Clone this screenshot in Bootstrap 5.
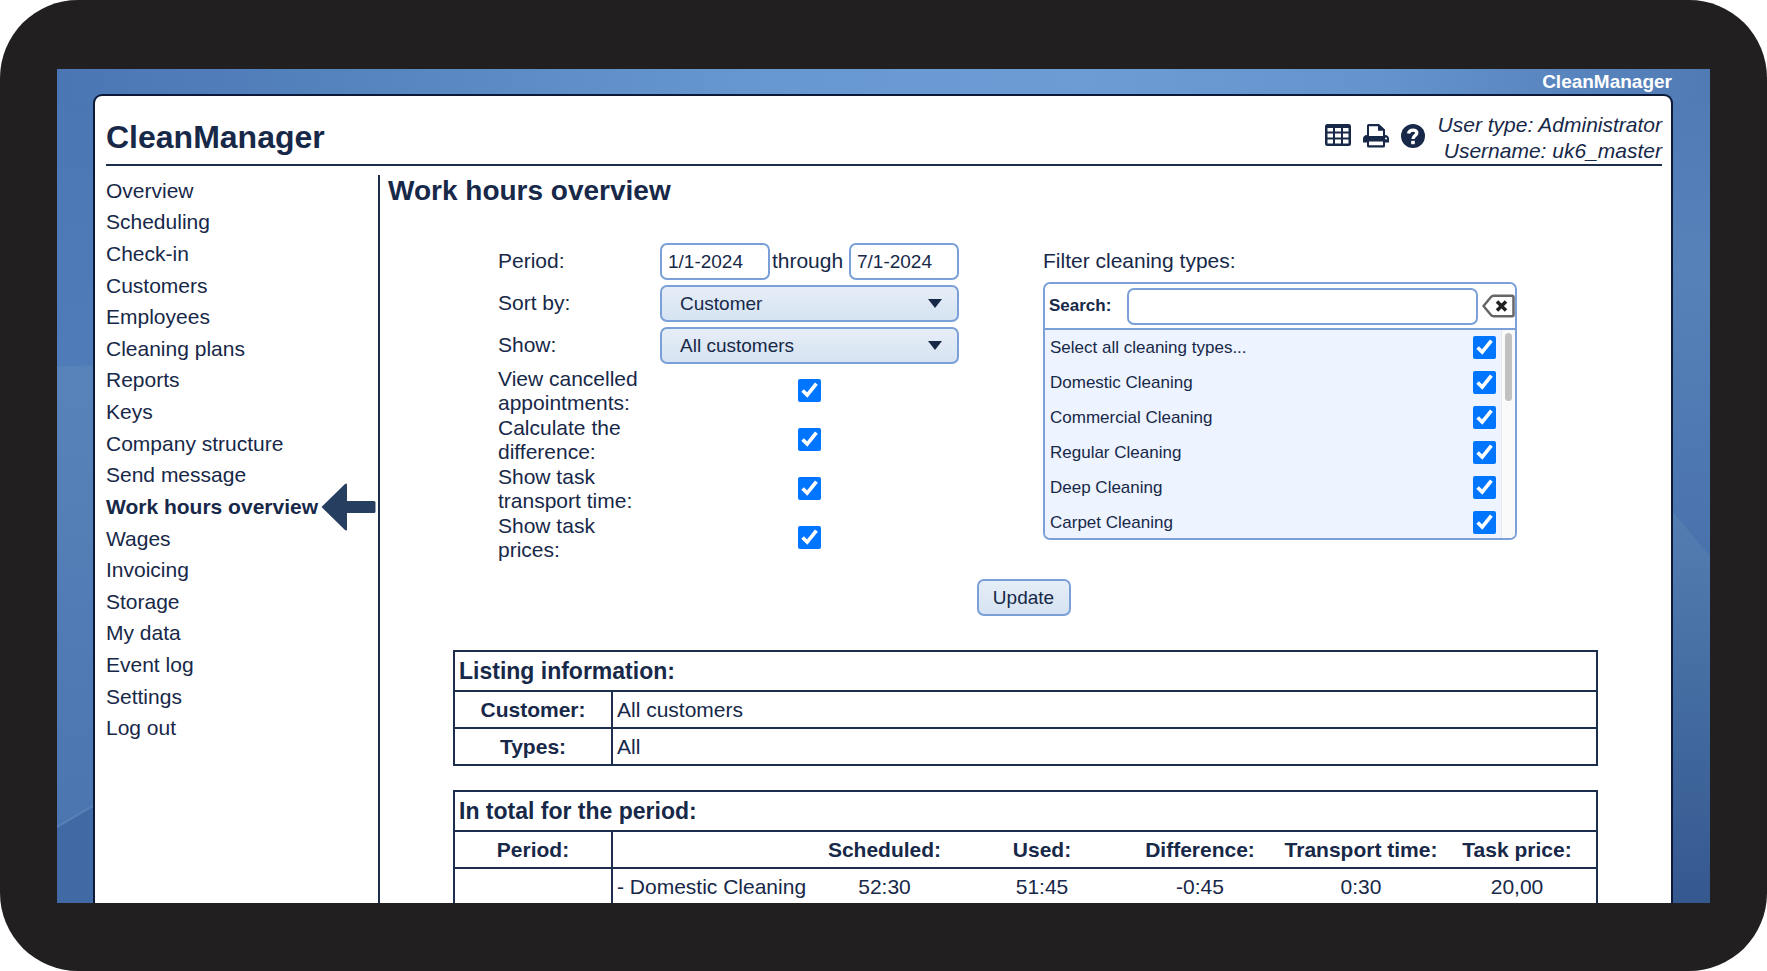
<!DOCTYPE html>
<html lang="en">
<head>
<meta charset="utf-8">
<meta name="viewport" content="width=device-width, initial-scale=1">
<title>CleanManager – Work hours overview</title>
<link rel="stylesheet" href="https://cdn.jsdelivr.net/npm/bootstrap@5.3.0/dist/css/bootstrap.min.css">
<style>
  :root { --ink: #172848; --line: #1d2d4c; --edge: #7ba0d8; }
  body { font-family: "Liberation Sans", Arial, sans-serif; font-size: 21px; line-height: 24px; color: var(--ink); background: #fff; }
  a { color: inherit; text-decoration: none; }
  .device { background: #221f20; border-radius: 78px; padding: 69px 57px 68px; }
  .screen { background: #5480b9; }
  .backdrop { inset: 0; }
  .brandline { font-size: 19px; line-height: 25px; color: #fff; padding-right: 38px; }
  .sheet { margin: 0 37px 0 36px; padding: 0 9px 0 11px; border: 2px solid #0c1a38; border-bottom: 0; border-radius: 9px 9px 0 0; }
  .masthead { height: 70px; padding-top: 16px; border-bottom: 2px solid var(--line); }
  .site-name { font-size: 32px; line-height: 36px; padding-top: 7px; }
  .user-info { line-height: 26px; }
  .tools { gap: 12px; padding-top: 10px; margin-right: 13px; }
  .tools button, .clear-btn { background: none; border: 0; padding: 0; line-height: 0; color: inherit; }
  .side { width: 274px; border-right: 2px solid var(--line); margin-top: 9px; }
  .menu { height: 569px; grid-auto-rows: 1fr; align-items: center; }
  .marker { flex: none; margin-left: 3px; }
  .content { padding-left: 8px; }
  .page-title { font-size: 28px; line-height: 32px; padding-top: 9px; margin-bottom: 36px; }
  .filters { display: grid; grid-template-columns: 162px 299px 84px 474px; justify-content: center; margin-left: -35px; }
  .fields { display: grid; grid-template-columns: 162px 299px; grid-auto-rows: 42px; }
  .fields label { align-self: start; padding: 6px 4px 0 0; }
  .ticks { display: grid; grid-template-columns: 155px 1fr; column-gap: 7px; grid-auto-rows: 49px; }
  .ticks label { line-height: 24px; margin-top: -2px; }
  .ticks input { margin-top: 10px; }
  .tick { width: 23px; height: 23px; margin: 0; accent-color: #0075ff; }
  .txt, .pick, .update { height: 37px; border: 2px solid var(--edge); border-radius: 7px; color: var(--ink); font-size: 19px; line-height: 24px; }
  .txt { padding: 0 6px; background: #fff; min-width: 0; }
  .date { width: 110px; }
  .pick { width: 100%; appearance: none; padding: 0 18px; background: linear-gradient(#e6eef7, #d6e3f2); }
  .caret { right: 17px; top: 14px; pointer-events: none; }
  .update { background: linear-gradient(#e6eef7, #d6e3f2); width: 94px; padding: 0; }
  .submit-row { padding: 14px 3px 0 0; }
  .types-title { padding-top: 6px; margin-bottom: 9px; }
  .typebox { border: 2px solid var(--edge); border-radius: 7px; overflow: hidden; font-size: 17px; }
  .typebox-head { height: 46px; padding: 0 0 0 4px; border-bottom: 2px solid var(--edge); }
  .typelist { height: 208px; background: #edf3ff; }
  .typelist li { height: 35px; padding: 0 5px 0 5px; }
  .track { width: 14px; background: #fafafa; border-left: 1px solid #e6e8ee; padding: 3px 2px 0 3px; }
  .thumb { height: 68px; width: 7px; border-radius: 4px; background: #c1c1c1; }
  .report { table-layout: fixed; border-collapse: collapse; width: 100%; border: 2px solid var(--line); }
  .report th, .report td { height: 37px; padding: 0 0 0 4px; white-space: nowrap; border-bottom: 2px solid var(--line); }
  .report .cap th { height: 40px; font-size: 23px; }
  .report .first { border-right: 2px solid var(--line); padding: 0; text-align: center; }
  .report .num { text-align: center; padding: 0; }
  .reports { padding: 34px 64px 0 65px; }
</style>
</head>
<body>
<div class="device d-flex vh-100">
  <div class="screen flex-grow-1 position-relative overflow-hidden d-flex flex-column">
    <svg class="backdrop position-absolute w-100 h-100" viewBox="0 0 1653 834" preserveAspectRatio="none" aria-hidden="true">
      <defs>
        <linearGradient id="top"><stop offset="0" stop-color="#4b76b4"/><stop offset=".2" stop-color="#5685bf"/><stop offset=".42" stop-color="#6797d1"/><stop offset=".62" stop-color="#6d9cd5"/><stop offset=".8" stop-color="#6493cd"/><stop offset="1" stop-color="#507ab4"/></linearGradient>
        <linearGradient id="left1" x2="0" y2="1"><stop offset="0" stop-color="#4b76b4"/><stop offset="1" stop-color="#4f7cb9"/></linearGradient>
        <linearGradient id="left2" x2="0" y2="1"><stop offset="0" stop-color="#5883ba"/><stop offset=".6" stop-color="#4f7ab3"/><stop offset="1" stop-color="#4c75b0"/></linearGradient>
        <linearGradient id="right1" x2="0" y2="1"><stop offset="0" stop-color="#507ab4"/><stop offset=".4" stop-color="#5781b9"/><stop offset="1" stop-color="#4972ac"/></linearGradient>
        <linearGradient id="right2" x2="0" y2="1"><stop offset="0" stop-color="#567fb3"/><stop offset=".45" stop-color="#456ea3"/><stop offset="1" stop-color="#35588f"/></linearGradient>
      </defs>
      <path fill="url(#left1)" d="M0 0H60V297H0z"/>
      <path fill="url(#left2)" d="M0 298L60 295V780H0z"/>
      <path fill="#416aa5" d="M0 758L60 723V834H0z"/>
      <path stroke="#5881b6" stroke-width="2" d="M0 758L60 723"/>
      <path fill="url(#right1)" d="M1600 0H1653V500H1600z"/>
      <path fill="url(#right2)" d="M1600 425L1653 487V834H1600z"/>
      <path fill="url(#top)" d="M0 0H1653V34H0z"/>
    </svg>
    <div class="brandline position-relative text-end fw-bold">CleanManager</div>
    <div class="sheet position-relative bg-white flex-grow-1 d-flex flex-column">
      <header class="masthead d-flex justify-content-between flex-shrink-0">
        <h1 class="site-name fw-bold m-0">CleanManager</h1>
        <div class="d-flex">
          <div class="tools d-flex align-items-start">
            <button type="button" aria-label="Spreadsheet"><svg width="26" height="26" viewBox="0 0 26 26"><rect y="2" width="26" height="22" rx="2.500" fill="currentColor"/><path fill="#fff" d="M2.500 6h5.500v3.500h-5.500zM10 6h6v3.500h-6zM18 6h5.500v3.500H18zM2.500 11.500h5.500v4h-5.500zM10 11.500h6v4h-6zM18 11.500h5.500v4H18zM2.500 17.500h5.500v4h-5.500zM10 17.500h6v4h-6zM18 17.500h5.500v4H18z"/></svg></button>
            <button type="button" aria-label="Print"><svg width="26" height="26" viewBox="0 0 26 26"><path fill="currentColor" d="M4 13V3.500Q4 2 5.500 2H16l6 5.500V13q4 .3 4 4v3.500h-4V24q0 1.500-1.500 1.500h-15Q4 25.500 4 24v-3.500H0V17q0-3.700 4-4z"/><path fill="#fff" d="M6 4.200h9v4.500h5V14H6zM6 19.500h14v3.800H6z"/><circle cx="23" cy="16.500" r="1" fill="#fff"/></svg></button>
            <button type="button" aria-label="Help"><svg width="24" height="26" viewBox="0 0 24 26"><circle cx="12" cy="14" r="12" fill="currentColor"/><path fill="none" stroke="#fff" stroke-width="3.400" d="M7.500 11.500C8.500 7 16 7.200 15.800 11c-.1 2.800-3.800 2.500-3.800 6"/><path fill="#fff" d="M10.200 18.800h3.600v3.400h-3.600z"/></svg></button>
          </div>
          <div class="user-info fst-italic text-end">User type: Administrator<br>Username: uk6_master</div>
        </div>
      </header>
      <div class="d-flex flex-grow-1">
        <nav class="side flex-shrink-0" aria-label="Main">
          <ul class="menu d-grid list-unstyled m-0">
            <li><a href="#">Overview</a></li>
            <li><a href="#">Scheduling</a></li>
            <li><a href="#">Check-in</a></li>
            <li><a href="#">Customers</a></li>
            <li><a href="#">Employees</a></li>
            <li><a href="#">Cleaning plans</a></li>
            <li><a href="#">Reports</a></li>
            <li><a href="#">Keys</a></li>
            <li><a href="#">Company structure</a></li>
            <li><a href="#">Send message</a></li>
            <li class="current d-flex align-items-center text-nowrap" style="height:24px"><a href="#" class="fw-bold" aria-current="page">Work hours overview</a><svg class="marker" width="55" height="48" viewBox="0 0 55 48" aria-hidden="true"><path fill="#263e60" d="M.5 24L24 1q2-1.500 2 1V18H53q1.500 0 1.500 1.500v9Q54.500 30 53 30H26V46q0 2.500-2 1z"/></svg></li>
            <li><a href="#">Wages</a></li>
            <li><a href="#">Invoicing</a></li>
            <li><a href="#">Storage</a></li>
            <li><a href="#">My data</a></li>
            <li><a href="#">Event log</a></li>
            <li><a href="#">Settings</a></li>
            <li><a href="#">Log out</a></li>
          </ul>
        </nav>
        <main class="content flex-grow-1">
          <h2 class="page-title fw-bold">Work hours overview</h2>
          <form onsubmit="return false">
            <div class="filters">
              <div style="grid-column: span 2">
                <div class="fields">
                  <label for="from">Period:</label>
                  <div class="d-flex justify-content-between"><input class="txt date" id="from" type="text" value="1/1-2024"><label for="to">through</label><input class="txt date" id="to" type="text" value="7/1-2024"></div>
                  <label for="sort">Sort by:</label>
                  <div class="position-relative"><select class="pick" id="sort"><option>Customer</option></select><svg class="caret position-absolute" width="14" height="9" viewBox="0 0 14 9" aria-hidden="true"><path fill="#172848" d="M0 0h14L7 9z"/></svg></div>
                  <label for="show">Show:</label>
                  <div class="position-relative"><select class="pick" id="show"><option>All customers</option></select><svg class="caret position-absolute" width="14" height="9" viewBox="0 0 14 9" aria-hidden="true"><path fill="#172848" d="M0 0h14L7 9z"/></svg></div>
                </div>
                <div class="ticks">
                  <label for="c1">View cancelled appointments:</label><div class="text-center"><input class="tick" id="c1" type="checkbox" checked></div>
                  <label for="c2">Calculate the difference:</label><div class="text-center"><input class="tick" id="c2" type="checkbox" checked></div>
                  <label for="c3">Show task transport time:</label><div class="text-center"><input class="tick" id="c3" type="checkbox" checked></div>
                  <label for="c4">Show task prices:</label><div class="text-center"><input class="tick" id="c4" type="checkbox" checked></div>
                </div>
              </div>
              <div></div>
              <div>
                <div class="types-title">Filter cleaning types:</div>
                <div class="typebox">
                  <div class="typebox-head d-flex align-items-center">
                    <label for="search" class="fw-bold">Search:</label>
                    <input class="txt flex-grow-1 ms-3 me-1" id="search" type="text">
                    <button type="button" class="clear-btn" aria-label="Clear search"><svg width="33" height="24" viewBox="0 0 33 24"><path fill="#fff" stroke="#666" stroke-width="2.500" stroke-linejoin="round" d="M1.500 12L9 3q1-1.200 2.500-1.200H30q1.500 0 1.500 1.500v17.500q0 1.500-1.500 1.500H11.500Q10 22.300 9 21z"/><path stroke="#222" stroke-width="3.500" d="M15 7.500l9 9m0-9l-9 9"/></svg></button>
                  </div>
                  <div class="typelist d-flex overflow-hidden">
                    <ul class="list-unstyled m-0 flex-grow-1">
                      <li class="d-flex align-items-center justify-content-between"><label for="t0">Select all cleaning types...</label><input class="tick" id="t0" type="checkbox" checked></li>
                      <li class="d-flex align-items-center justify-content-between"><label for="t1">Domestic Cleaning</label><input class="tick" id="t1" type="checkbox" checked></li>
                      <li class="d-flex align-items-center justify-content-between"><label for="t2">Commercial Cleaning</label><input class="tick" id="t2" type="checkbox" checked></li>
                      <li class="d-flex align-items-center justify-content-between"><label for="t3">Regular Cleaning</label><input class="tick" id="t3" type="checkbox" checked></li>
                      <li class="d-flex align-items-center justify-content-between"><label for="t4">Deep Cleaning</label><input class="tick" id="t4" type="checkbox" checked></li>
                      <li class="d-flex align-items-center justify-content-between"><label for="t5">Carpet Cleaning</label><input class="tick" id="t5" type="checkbox" checked></li>
                    </ul>
                    <div class="track" aria-hidden="true"><div class="thumb"></div></div>
                  </div>
                </div>
              </div>
            </div>
            <div class="submit-row text-center"><button class="update" type="submit">Update</button></div>
          </form>
          <div class="reports">
            <table class="report mb-4">
              <colgroup><col style="width:158px"><col></colgroup>
              <tbody>
                <tr class="cap"><th colspan="2">Listing information:</th></tr>
                <tr><th class="first">Customer:</th><td>All customers</td></tr>
                <tr><th class="first">Types:</th><td>All</td></tr>
              </tbody>
            </table>
            <table class="report">
              <colgroup><col style="width:158px"><col style="width:193px"><col style="width:159px"><col style="width:156px"><col style="width:160px"><col style="width:162px"><col></colgroup>
              <tbody>
                <tr class="cap"><th colspan="7">In total for the period:</th></tr>
                <tr><th class="first">Period:</th><th></th><th class="num">Scheduled:</th><th class="num">Used:</th><th class="num">Difference:</th><th class="num">Transport time:</th><th class="num pe-1">Task price:</th></tr>
                <tr><td class="first"></td><td>- Domestic Cleaning</td><td class="num">52:30</td><td class="num">51:45</td><td class="num">-0:45</td><td class="num">0:30</td><td class="num pe-1">20,00</td></tr>
              </tbody>
            </table>
          </div>
        </main>
      </div>
    </div>
  </div>
</div>
<script src="https://cdn.jsdelivr.net/npm/bootstrap@5.3.0/dist/js/bootstrap.bundle.min.js"></script>
</body>
</html>
